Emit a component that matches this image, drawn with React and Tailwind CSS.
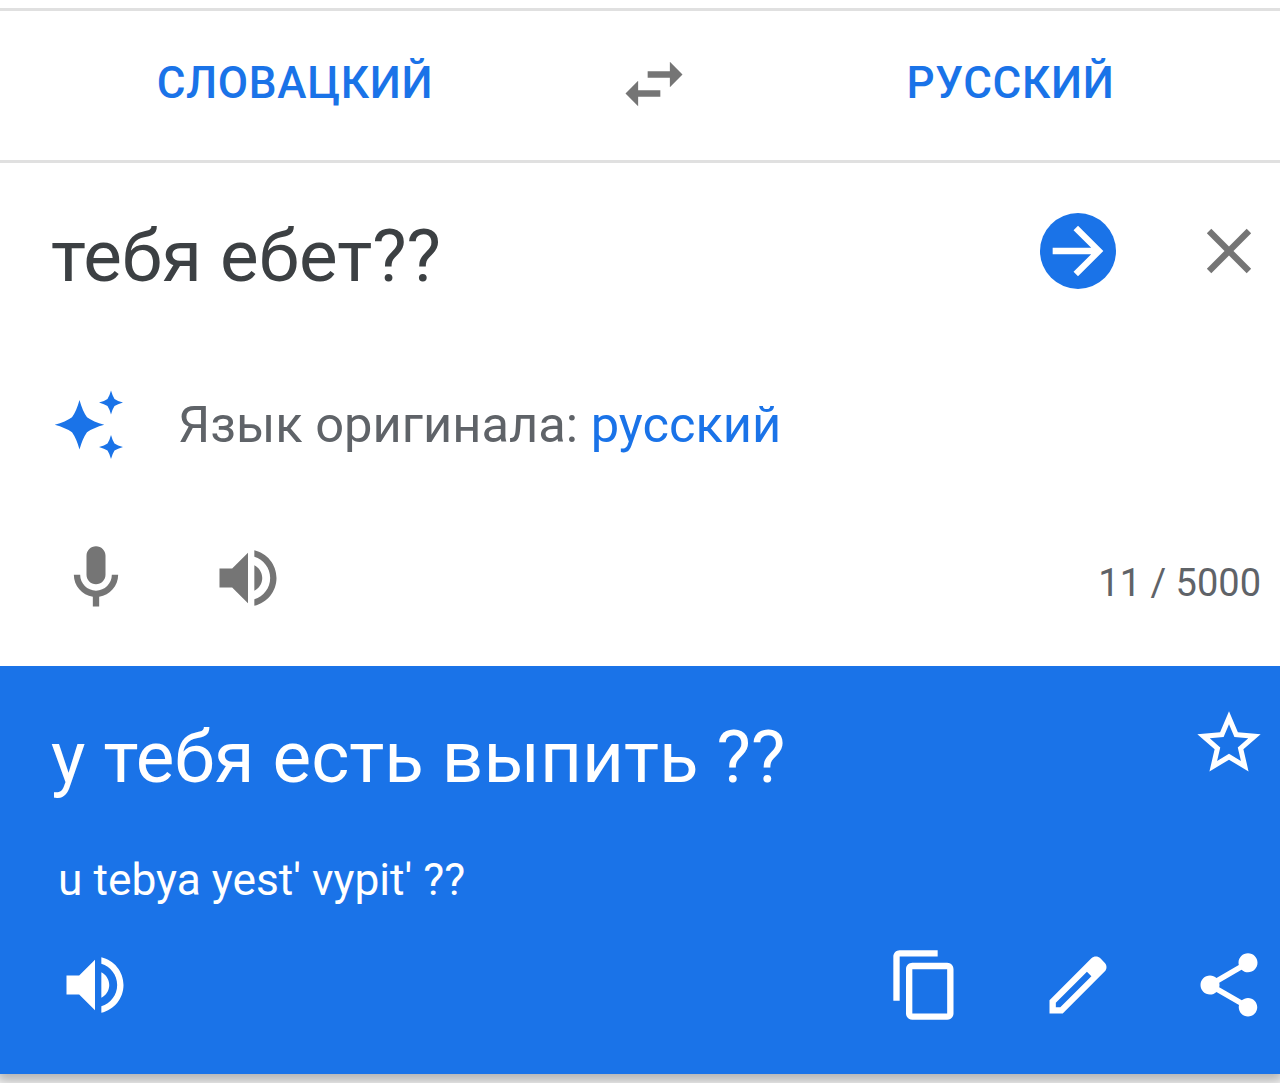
import React, { useState } from "react";

const ICONS = {
  swap: "M6.99 11L3 15l3.99 4v-3H14v-2H6.99v-3zM21 9l-3.99-4v3H10v2h7.01v3L21 9z",
  arrow: "M12 4l-1.41 1.41L16.17 11H4v2h12.17l-5.58 5.59L12 20l8-8z",
  close:
    "M19 6.41L17.59 5 12 10.59 6.41 5 5 6.41 10.59 12 5 17.59 6.41 19 12 13.41 17.59 19 19 17.59 13.41 12z",
  mic: "M12 14c1.66 0 3-1.34 3-3V5c0-1.66-1.34-3-3-3S9 3.34 9 5v6c0 1.66 1.34 3 3 3zM17 11c0 2.76-2.24 5-5 5s-5-2.24-5-5H5c0 3.53 2.61 6.43 6 6.92V21h2v-3.08c3.39-.49 6-3.39 6-6.92h-2z",
  volume:
    "M3 9v6h4l5 5V4L7 9H3zm13.5 3c0-1.77-1.02-3.29-2.5-4.03v8.05c1.48-.73 2.5-2.25 2.5-4.02zM14 3.23v2.06c2.89.86 5 3.54 5 6.71s-2.11 5.85-5 6.71v2.06c4.01-.91 7-4.49 7-8.77s-2.99-7.86-7-8.77z",
  star: "M22 9.24l-7.19-.62L12 2 9.19 8.63 2 9.24l5.46 4.73L5.82 21 12 17.27 18.18 21l-1.63-7.03L22 9.24zM12 15.4l-3.76 2.27 1-4.28-3.32-2.88 4.38-.38L12 6.1l1.71 4.04 4.38.38-3.32 2.88 1 4.28L12 15.4z",
  copy: "M16 1H4c-1.1 0-2 .9-2 2v14h2V3h12V1zm3 4H8c-1.1 0-2 .9-2 2v14c0 1.1.9 2 2 2h11c1.1 0 2-.9 2-2V7c0-1.1-.9-2-2-2zm0 16H8V7h11v14z",
  edit: "M20.41 4.94l-1.35-1.35c-.78-.78-2.05-.78-2.83 0L3 16.82V21h4.18L20.41 7.77c.79-.78.79-2.05 0-2.83zm-14 14.12L5 19v-1.36l9.82-9.82 1.41 1.41-9.82 9.83z",
  share:
    "M18 16.08c-.76 0-1.44.3-1.96.77L8.91 12.7c.05-.23.09-.46.09-.7s-.04-.47-.09-.7l7.05-4.11c.54.5 1.25.81 2.04.81 1.66 0 3-1.34 3-3s-1.34-3-3-3-3 1.34-3 3c0 .24.04.47.09.7L8.04 9.81C7.5 9.31 6.79 9 6 9c-1.66 0-3 1.34-3 3s1.34 3 3 3c.79 0 1.5-.31 2.04-.81l7.12 4.16c-.05.21-.08.43-.08.65 0 1.61 1.31 2.92 2.92 2.92s2.92-1.31 2.92-2.92-1.31-2.92-2.92-2.92z",
};

const Icon = ({ name }) => (
  <svg viewBox="0 0 24 24" fill="currentColor" className="block size-[76px]">
    <path d={ICONS[name]} />
  </svg>
);

const IconButton = ({ name, label, className = "", onClick }) => (
  <button
    type="button"
    aria-label={label}
    onClick={onClick}
    className={`size-[76px] shrink-0 ${className}`}
  >
    <Icon name={name} />
  </button>
);

const Sparkles = () => (
  <svg viewBox="0 0 76 76" fill="#1a73e8" className="block size-[76px] shrink-0">
    <path d="M28.5 13Q31.5 24 36 30.3Q42.3 34.8 53.3 37.8Q42.3 40.8 36 45.3Q31.5 51.6 28.5 62.6Q25.5 51.6 21 45.3Q14.7 40.8 3.7 37.8Q14.7 34.8 21 30.3Q25.5 24 28.5 13z" />
    <path d="M60 3.5Q61.5 9 63.5 12Q66.5 14 72 15.5Q66.5 17 63.5 19Q61.5 22 60 27.5Q58.5 22 56.5 19Q53.5 17 48 15.5Q53.5 14 56.5 12Q58.5 9 60 3.5z" />
    <path d="M60 48Q61.5 53.5 63.5 56.5Q66.5 58.5 72 60Q66.5 61.5 63.5 63.5Q61.5 66.5 60 72Q58.5 66.5 56.5 63.5Q53.5 61.5 48 60Q53.5 58.5 56.5 56.5Q58.5 53.5 60 48z" />
  </svg>
);

const LanguageBar = ({ source, target, onSwap }) => (
  <div className="flex h-[155px] items-center border-y-3 border-[#e0e0e0] text-[44px] font-medium uppercase leading-none text-[#1a73e8]">
    <button type="button" className="w-[590px] shrink-0 pb-1.5 text-center uppercase tracking-[0.7px]">
      {source}
    </button>
    <div className="flex w-[127px] shrink-0 justify-center pb-1">
      <IconButton name="swap" label="Поменять языки" className="text-[#757575]" onClick={onSwap} />
    </div>
    <button type="button" className="w-[587px] shrink-0 pb-1.5 text-center uppercase tracking-[0.7px]">
      {target}
    </button>
  </div>
);

const SourcePanel = ({ text, onClear }) => (
  <div className="relative z-10 flex h-[503px] flex-col bg-white pt-[50px] text-[#757575]">
    <div className="flex h-[76px] items-center pl-[51px] pr-[13px]">
      <p className="flex-1 whitespace-nowrap pt-2.5 text-[72.8px] leading-none text-[#3c4043]">
        {text}
      </p>
      <IconButton name="arrow" label="Перевести" className="mr-[75px] rounded-full bg-[#1a73e8] text-white" />
      <IconButton name="close" label="Очистить" onClick={onClear} />
    </div>
    <div className="mt-[98px] flex h-[76px] items-center pl-[51px]">
      <Sparkles />
      <p className="ml-[51px] whitespace-nowrap text-[50.65px] leading-none text-[#5f6368]">
        Язык оригинала: <span className="text-[#1a73e8]">русский</span>
      </p>
    </div>
    <div className="mt-[77px] flex h-[76px] items-center pl-[58px] pr-[19px]">
      <IconButton name="mic" label="Голосовой ввод" />
      <IconButton name="volume" label="Прослушать" className="ml-[76px]" />
      <p className="ml-auto whitespace-nowrap pt-2.5 text-[38px] leading-none text-[#5f6368]">
        {text.length} / 5000
      </p>
    </div>
  </div>
);

const ResultPanel = ({ text, translit }) => (
  <div className="flex h-[408px] flex-col bg-[#1a73e8] pt-[39px] text-white shadow-[0_4px_12px_4px_rgba(0,0,0,0.3)]">
    <div className="flex h-[76px] items-center pl-[51px] pr-[13px]">
      <p className="flex-1 whitespace-nowrap pt-[29px] text-[72.8px] leading-none">{text}</p>
      <IconButton name="star" label="Сохранить" />
    </div>
    <p className="mt-[73px] pl-[58px] text-[44.3px] leading-[52px]">{translit}</p>
    <div className="mt-[41px] flex h-[76px] items-center pl-[57px] pr-[13px]">
      <IconButton name="volume" label="Прослушать перевод" className="mr-auto" />
      <IconButton name="copy" label="Копировать" />
      <IconButton name="edit" label="Исправить" className="ml-[77px]" />
      <IconButton name="share" label="Поделиться" className="ml-[75px]" />
    </div>
  </div>
);

const App = () => {
  const [languages, setLanguages] = useState(["словацкий", "русский"]);
  const [text, setText] = useState("тебя ебет??");

  return (
    <div className="h-[1083px] w-[1280px] overflow-hidden bg-white pt-2 font-['Roboto',sans-serif]">
      <LanguageBar
        source={languages[0]}
        target={languages[1]}
        onSwap={() => setLanguages(([a, b]) => [b, a])}
      />
      <SourcePanel text={text} onClear={() => setText("")} />
      <ResultPanel text="у тебя есть выпить ??" translit="u tebya yest' vypit' ??" />
    </div>
  );
};

export default App;
